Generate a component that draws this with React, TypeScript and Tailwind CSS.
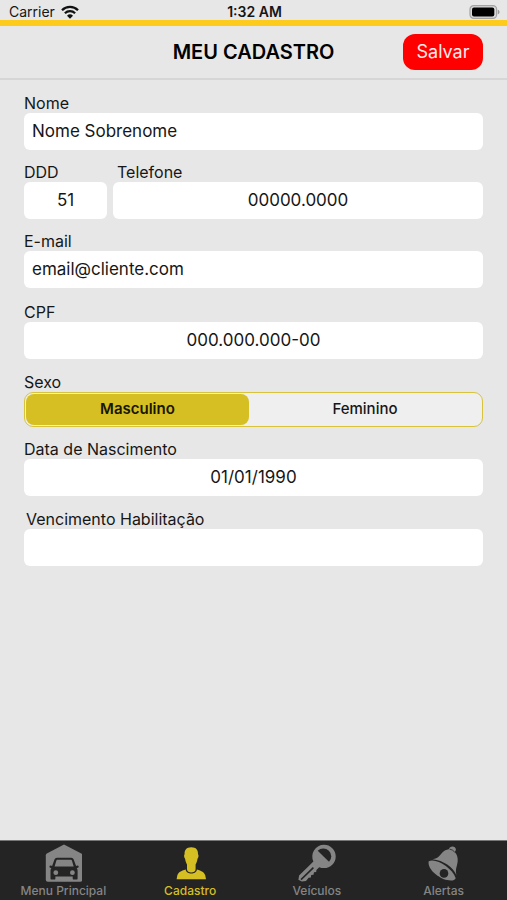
import { useState } from 'react';
import type { ReactNode } from 'react';

type FieldProps = {
  id: string;
  label: string;
  value?: string;
  type?: string;
  centered?: boolean;
  className?: string;
  labelClass?: string;
};

function Field({ id, label, value = '', type = 'text', centered = false, className = '', labelClass = '' }: FieldProps) {
  return (
    <div className={`flex min-w-0 flex-col ${className}`}>
      <label htmlFor={id} className={`h-5 text-base leading-5 whitespace-nowrap ${labelClass}`}>
        {label}
      </label>
      <input
        id={id}
        type={type}
        defaultValue={value}
        className={`h-[37px] w-full min-w-0 rounded-md bg-white px-2 pb-0.5 text-[17px] outline-none ${centered ? 'text-center' : ''}`}
      />
    </div>
  );
}

function WifiIcon() {
  return (
    <svg viewBox="0 0 18 14" className="h-3.5 w-[18px]" aria-hidden="true">
      <path d="M1 5.2a11.3 11.3 0 0 1 16 0" fill="none" stroke="#111" strokeWidth="2.3" />
      <path d="M3.9 8.2a7.2 7.2 0 0 1 10.2 0" fill="none" stroke="#111" strokeWidth="2.2" />
      <path d="M9 13.7 6 10.7a4.3 4.3 0 0 1 6 0Z" fill="#111" />
    </svg>
  );
}

function BatteryIcon() {
  return (
    <svg viewBox="0 0 31 14" className="h-3.5 w-[31px]" aria-hidden="true">
      <rect x="1" y="0.7" width="26.6" height="12.6" rx="3.6" fill="#d8d8d8" stroke="#a3a3a3" strokeWidth="1.2" />
      <rect x="3" y="2.5" width="22.3" height="9" rx="2" fill="#000" />
      <path d="M28.8 4.7c2.3.7 2.3 3.9 0 4.6Z" fill="#999" />
    </svg>
  );
}

function GarageIcon() {
  return (
    <svg viewBox="0 0 38 38" className="size-[38px]" aria-hidden="true">
      <path d="M20 .6 37.3 9.5q1 .6 1 1.8V35.8q0 2-2 2H3.8q-2 0-2-2V11.3q0-1.2 1-1.8Z" fill="currentColor" />
      <path
        d="M12.8 13.7h14.6q1.6 0 2.2 1.6l2.5 6.7 1.2-.5q1.4 0 1.4 1.2 0 1.1-2 1.4.9 1 .9 2.7v7.6q0 1.2-1.2 1.2h-2.5q-1.2 0-1.2-1.2v-1.8H11.4v1.8q0 1.2-1.2 1.2H7.7q-1.2 0-1.2-1.2v-7.6q0-1.7.9-2.7-2-.3-2-1.4 0-1.2 1.4-1.2l1.3.5 2.5-6.7q.6-1.6 2.2-1.6Z"
        fill="#242424"
      />
      <path d="M13.2 15.8h13.8q.6 0 .9.8l1.8 5.8H10.6l1.8-5.8q.2-.8.8-.8Z" fill="currentColor" />
      <circle cx="11.8" cy="28.7" r="2.4" fill="currentColor" />
      <circle cx="28.4" cy="28.7" r="2.4" fill="currentColor" />
    </svg>
  );
}

function PersonIcon() {
  return (
    <svg viewBox="0 0 38 38" className="size-[38px]" aria-hidden="true">
      <path
        d="M20.3 3.2c4.9 0 7 2.8 6.7 7 .9.6.5 3.6-.5 4.6-.4 2.6-1 4.2-1.9 5.6v4.8c0 4.4-8.6 4.4-8.6 0v-4.8c-.9-1.4-1.5-3-1.9-5.6-1-1-1.4-4-.5-4.6-.3-4.2 1.8-7 6.7-7Z"
        fill="currentColor"
      />
      <path
        d="M14.7 25.4c.4 5.4 10.8 5.4 11.2 0 4.6 1.4 7.6 2.8 8.4 6.1l.7 3.7H5.6l.7-3.7c.8-3.3 3.8-4.7 8.4-6.1Z"
        fill="currentColor"
      />
    </svg>
  );
}

function KeyIcon() {
  return (
    <svg viewBox="0 0 38 38" className="size-[38px]" aria-hidden="true">
      <path
        d="M26 .7a11.7 11.7 0 0 1 0 23.4q-2.6 0-4.8-.9l-2.8 2.8-.2 2-2.2.3-.5 2.4-2.3.3-.4 2.4-2.2.4-2.6 3.2-4.2.4L.4 35.7l.7-4.3L15.4 17.4A11.7 11.7 0 0 1 26 .7Z"
        fill="currentColor"
      />
      <path d="M19.7 6.8 31 17.8A7.8 7.8 0 1 0 19.7 6.8Z" fill="#242424" />
      <path d="M3 35.6 15.4 23.6" fill="none" stroke="#242424" strokeWidth="1.5" />
    </svg>
  );
}

function BellIcon() {
  return (
    <svg viewBox="0 0 38 38" className="size-[38px]" aria-hidden="true">
      <path
        d="M23.8 5.2c1-3.6 7-3.4 7.1.4q0 1.4-1.2 2.4c3.6 4 3.6 8.6 2.2 13.6-1 3.6-1.4 6-.5 9.3C27.8 23 18.6 16.5 7.6 15.3c6-.8 7.3-4 9.8-6.7 1.8-2 3.7-3.1 6.4-3.4Z"
        fill="currentColor"
      />
      <path
        d="M3.7 17.2c7.7-3.3 23.4 6.7 27 17-1 2.4-4.4 2.7-8.6 1.9C13.9 34.4 2 25 3.7 17.2Z"
        fill="currentColor"
      />
      <path d="M24.5 5.1q3.2.5 5.2 3" fill="none" stroke="#242424" strokeWidth=".8" />
      <circle cx="19" cy="29.4" r="4.3" fill="#242424" />
    </svg>
  );
}

const tabs: { name: string; icon: ReactNode }[] = [
  { name: 'Menu Principal', icon: <GarageIcon /> },
  { name: 'Cadastro', icon: <PersonIcon /> },
  { name: 'Veículos', icon: <KeyIcon /> },
  { name: 'Alertas', icon: <BellIcon /> },
];

const genders = ['Masculino', 'Feminino'];

export default function App() {
  const [gender, setGender] = useState('Masculino');
  const [tab, setTab] = useState('Cadastro');

  return (
    <div className="flex min-h-screen flex-col bg-[#e7e7e7] font-['Inter','Liberation_Sans',sans-serif] text-[#161616]">
      <div className="grid h-5 grid-cols-3 items-end pr-[7px] pl-[9px] text-sm leading-4">
        <div className="flex items-center gap-1.5">
          <span>Carrier</span>
          <WifiIcon />
        </div>
        <span className="text-center font-semibold">1:32 AM</span>
        <div className="flex justify-end pb-px">
          <BatteryIcon />
        </div>
      </div>
      <div className="h-1.5 bg-[#fccb1b]" />
      <header className="grid h-[54px] grid-cols-[1fr_auto_1fr] items-center border-b-2 border-[#d6d6d6] px-6">
        <h1 className="col-start-2 text-xl font-semibold text-black">MEU CADASTRO</h1>
        <button type="button" className="h-9 w-20 justify-self-end rounded-xl bg-[#fe0000] text-lg text-[#ffeaea]">
          Salvar
        </button>
      </header>

      <form className="flex flex-1 flex-col px-6 pt-[13px]" onSubmit={(e) => e.preventDefault()}>
        <Field id="nome" label="Nome" value="Nome Sobrenome" />
        <div className="mt-3 flex gap-1.5">
          <Field id="ddd" label="DDD" value="51" centered className="w-[83px]" />
          <Field id="telefone" label="Telefone" value="00000.0000" type="tel" centered className="flex-1" labelClass="pl-1" />
        </div>
        <Field id="email" label="E-mail" value="email@cliente.com" className="mt-3" />
        <Field id="cpf" label="CPF" value="000.000.000-00" centered className="mt-3.5" />
        <fieldset className="mt-[13px]">
          <legend className="h-5 text-base leading-5">Sexo</legend>
          <div className="grid h-[35px] grid-cols-[49fr_51fr] rounded-[9px] border border-[#d8c43c] bg-[#efefef] p-px">
            {genders.map((name) => (
              <label
                key={name}
                className={`flex cursor-pointer items-center justify-center rounded-lg text-[15px] ${
                  gender === name ? 'bg-[#d5bf22] font-semibold text-[#181600]' : 'font-medium'
                }`}
              >
                <input
                  type="radio"
                  name="sexo"
                  value={name}
                  checked={gender === name}
                  onChange={() => setGender(name)}
                  className="sr-only"
                />
                {name}
              </label>
            ))}
          </div>
        </fieldset>
        <Field id="nascimento" label="Data de Nascimento" value="01/01/1990" centered className="mt-3" />
        <Field id="habilitacao" label="Vencimento Habilitação" className="mt-[13px]" labelClass="pl-0.5" />
      </form>

      <nav className="grid h-[60px] grid-cols-4 border-t border-[#777] bg-[#242424]">
        {tabs.map(({ name, icon }) => (
          <button
            key={name}
            type="button"
            onClick={() => setTab(name)}
            className={`flex flex-col items-center pt-[3px] text-xs leading-[18px] font-medium whitespace-nowrap ${
              tab === name ? 'text-[#d5bf22]' : 'text-[#858585]'
            }`}
          >
            {icon}
            {name}
          </button>
        ))}
      </nav>
    </div>
  );
}
